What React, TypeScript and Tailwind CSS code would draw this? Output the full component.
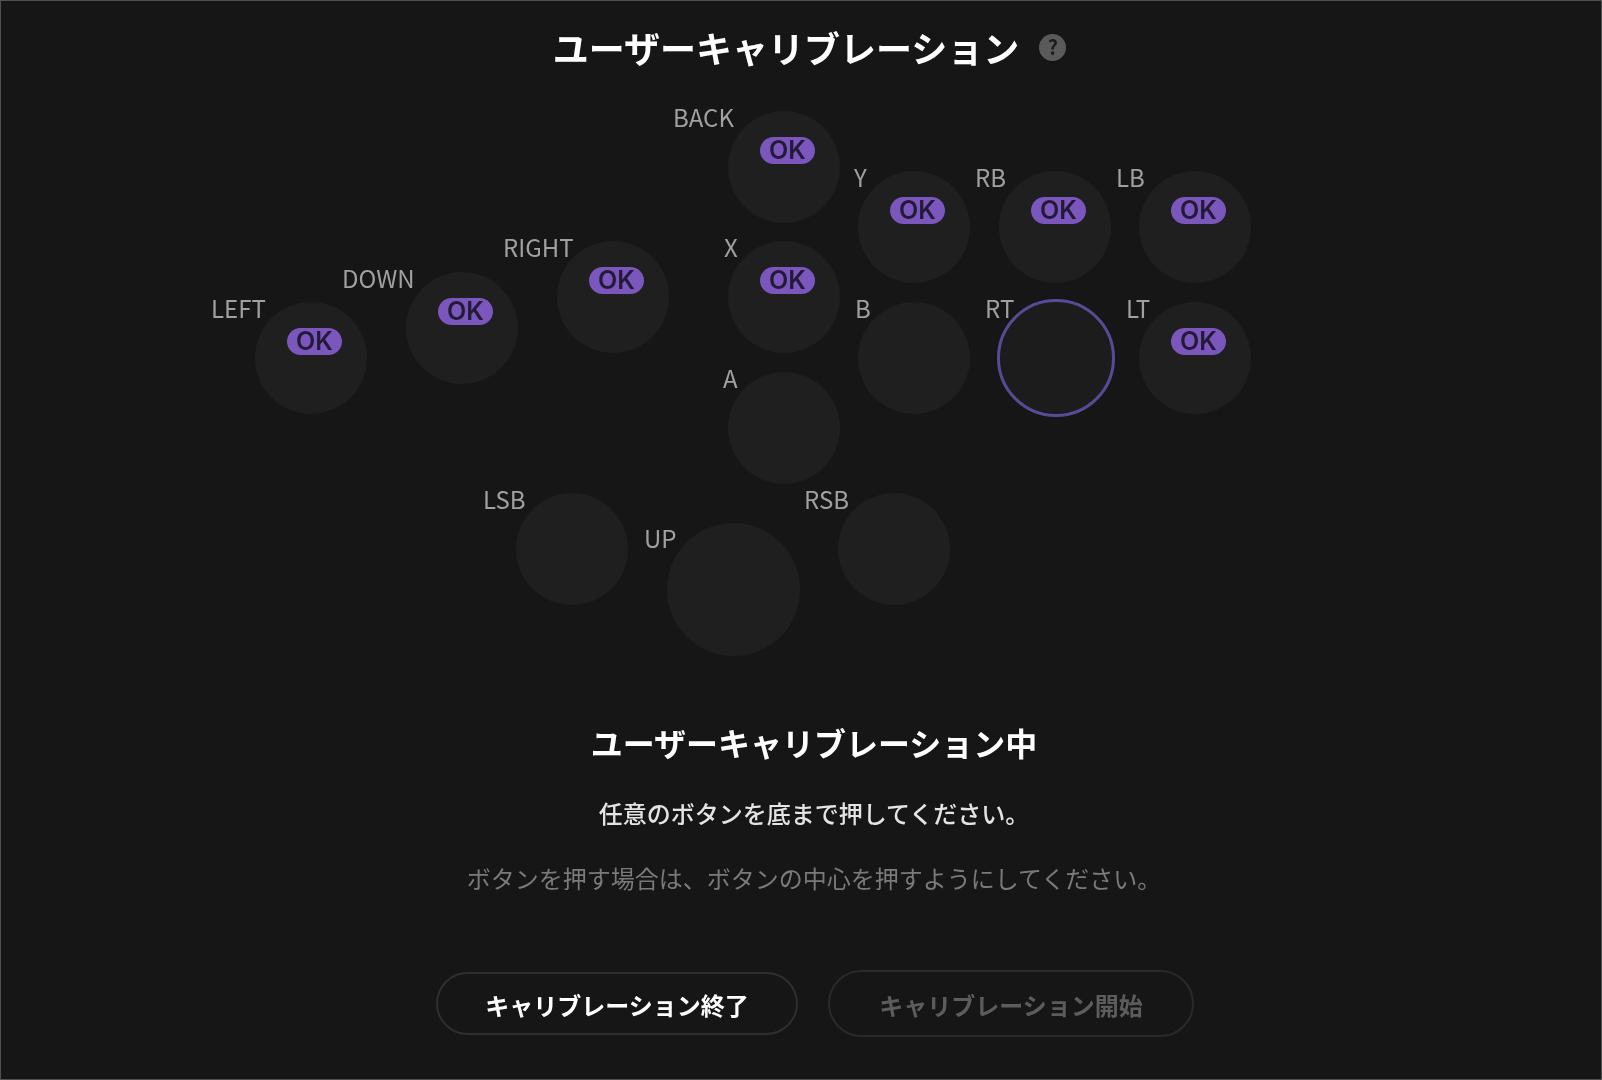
import React from 'react';

type Node = {
  name: string;
  circle: string;
  label: string;
  ok?: boolean;
  active?: boolean;
};

// free canvas, places are the content here
const nodes: Node[] = [
  { name: 'BACK', circle: 'left-[728px] top-[39px]', label: 'left-[673px] top-[31px]', ok: true },
  { name: 'Y', circle: 'left-[858px] top-[99px]', label: 'left-[854px] top-[91px]', ok: true },
  { name: 'RB', circle: 'left-[999px] top-[99px]', label: 'left-[975px] top-[91px]', ok: true },
  { name: 'LB', circle: 'left-[1139px] top-[99px]', label: 'left-[1116px] top-[91px]', ok: true },
  { name: 'RIGHT', circle: 'left-[557px] top-[169px]', label: 'left-[503px] top-[161px]', ok: true },
  { name: 'X', circle: 'left-[728px] top-[169px]', label: 'left-[724px] top-[161px]', ok: true },
  { name: 'DOWN', circle: 'left-[406px] top-[200px]', label: 'left-[342px] top-[192px]', ok: true },
  { name: 'LEFT', circle: 'left-[255px] top-[230px]', label: 'left-[211px] top-[222px]', ok: true },
  { name: 'B', circle: 'left-[858px] top-[230px]', label: 'left-[855px] top-[222px]' },
  { name: 'RT', circle: 'left-[1000px] top-[230px]', label: 'left-[985px] top-[222px]', active: true },
  { name: 'LT', circle: 'left-[1139px] top-[230px]', label: 'left-[1126px] top-[222px]', ok: true },
  { name: 'A', circle: 'left-[728px] top-[300px]', label: 'left-[723px] top-[292px]' },
  { name: 'LSB', circle: 'left-[516px] top-[421px]', label: 'left-[483px] top-[413px]' },
  { name: 'RSB', circle: 'left-[838px] top-[421px]', label: 'left-[804px] top-[413px]' },
  { name: 'UP', circle: 'left-[667px] top-[451px] w-[133px] h-[133px]', label: 'left-[644px] top-[452px]' },
];

const PadButton = ({ node }: { node: Node }) => (
  <>
    <div
      className={`absolute rounded-full ${node.active ? 'bg-[#1c1c1c] outline-[3px] outline-[#5a4a96]' : 'bg-[#1f1f1f]'} ${
        node.name === 'UP' ? '' : 'w-[112px] h-[112px]'
      } ${node.circle}`}
    >
      {node.ok && (
        <span className="absolute left-[32px] top-[26px] flex h-[27px] w-[55px] items-center justify-center rounded-full bg-[#7a56bd] font-['Inter',sans-serif] text-[25px] font-semibold leading-none text-[#231a36]">
          OK
        </span>
      )}
    </div>
    <span className={`absolute text-[24px] leading-[28px] text-[#a0a0a0] ${node.label}`}>{node.name}</span>
  </>
);

export default function App() {
  return (
    <div className="flex h-screen w-full flex-col overflow-hidden bg-[#161616] shadow-[inset_0_0_0_1px_#505050] blur-[0.4px] font-['Noto_Sans_CJK_JP','Noto_Sans',sans-serif]">
      <div className="flex items-center justify-center pb-[1px] pl-[17px] pt-[23px]">
        <h1 className="text-[36px] font-bold leading-[48px] text-white">ユーザーキャリブレーション</h1>
        <span className="ml-[20px] flex h-[27px] w-[27px] items-center justify-center rounded-full bg-[#5a5a5a] text-[20px] font-bold leading-none text-[#1c1c1c]">
          ?
        </span>
      </div>

      <div className="relative h-[628px] w-full">
        {nodes.map((node) => (
          <PadButton key={node.name} node={node} />
        ))}
      </div>

      <div className="ml-[26px] flex flex-col items-center">
        <h2 className="mt-[18px] text-[32px] font-bold leading-[48px] text-white">ユーザーキャリブレーション中</h2>
        <p className="mt-[29px] text-[24px] font-medium leading-[36px] text-[#e4e4e4]">任意のボタンを底まで押してください。</p>
        <p className="mt-[29px] text-[24px] leading-[36px] text-[#7a7a7a]">ボタンを押す場合は、ボタンの中心を押すようにしてください。</p>
        <div className="ml-[2px] mt-[74px] flex items-center gap-[30px]">
          <button className="h-[63px] w-[362px] rounded-full border-2 border-[#2e2e2e] pt-[2px] text-[24px] font-bold text-white">
            キャリブレーション終了
          </button>
          <button className="h-[67px] w-[366px] rounded-full border-2 border-[#2a2a2a] pt-[2px] text-[24px] font-bold text-[#5c5c5c]">
            キャリブレーション開始
          </button>
        </div>
      </div>
    </div>
  );
}
